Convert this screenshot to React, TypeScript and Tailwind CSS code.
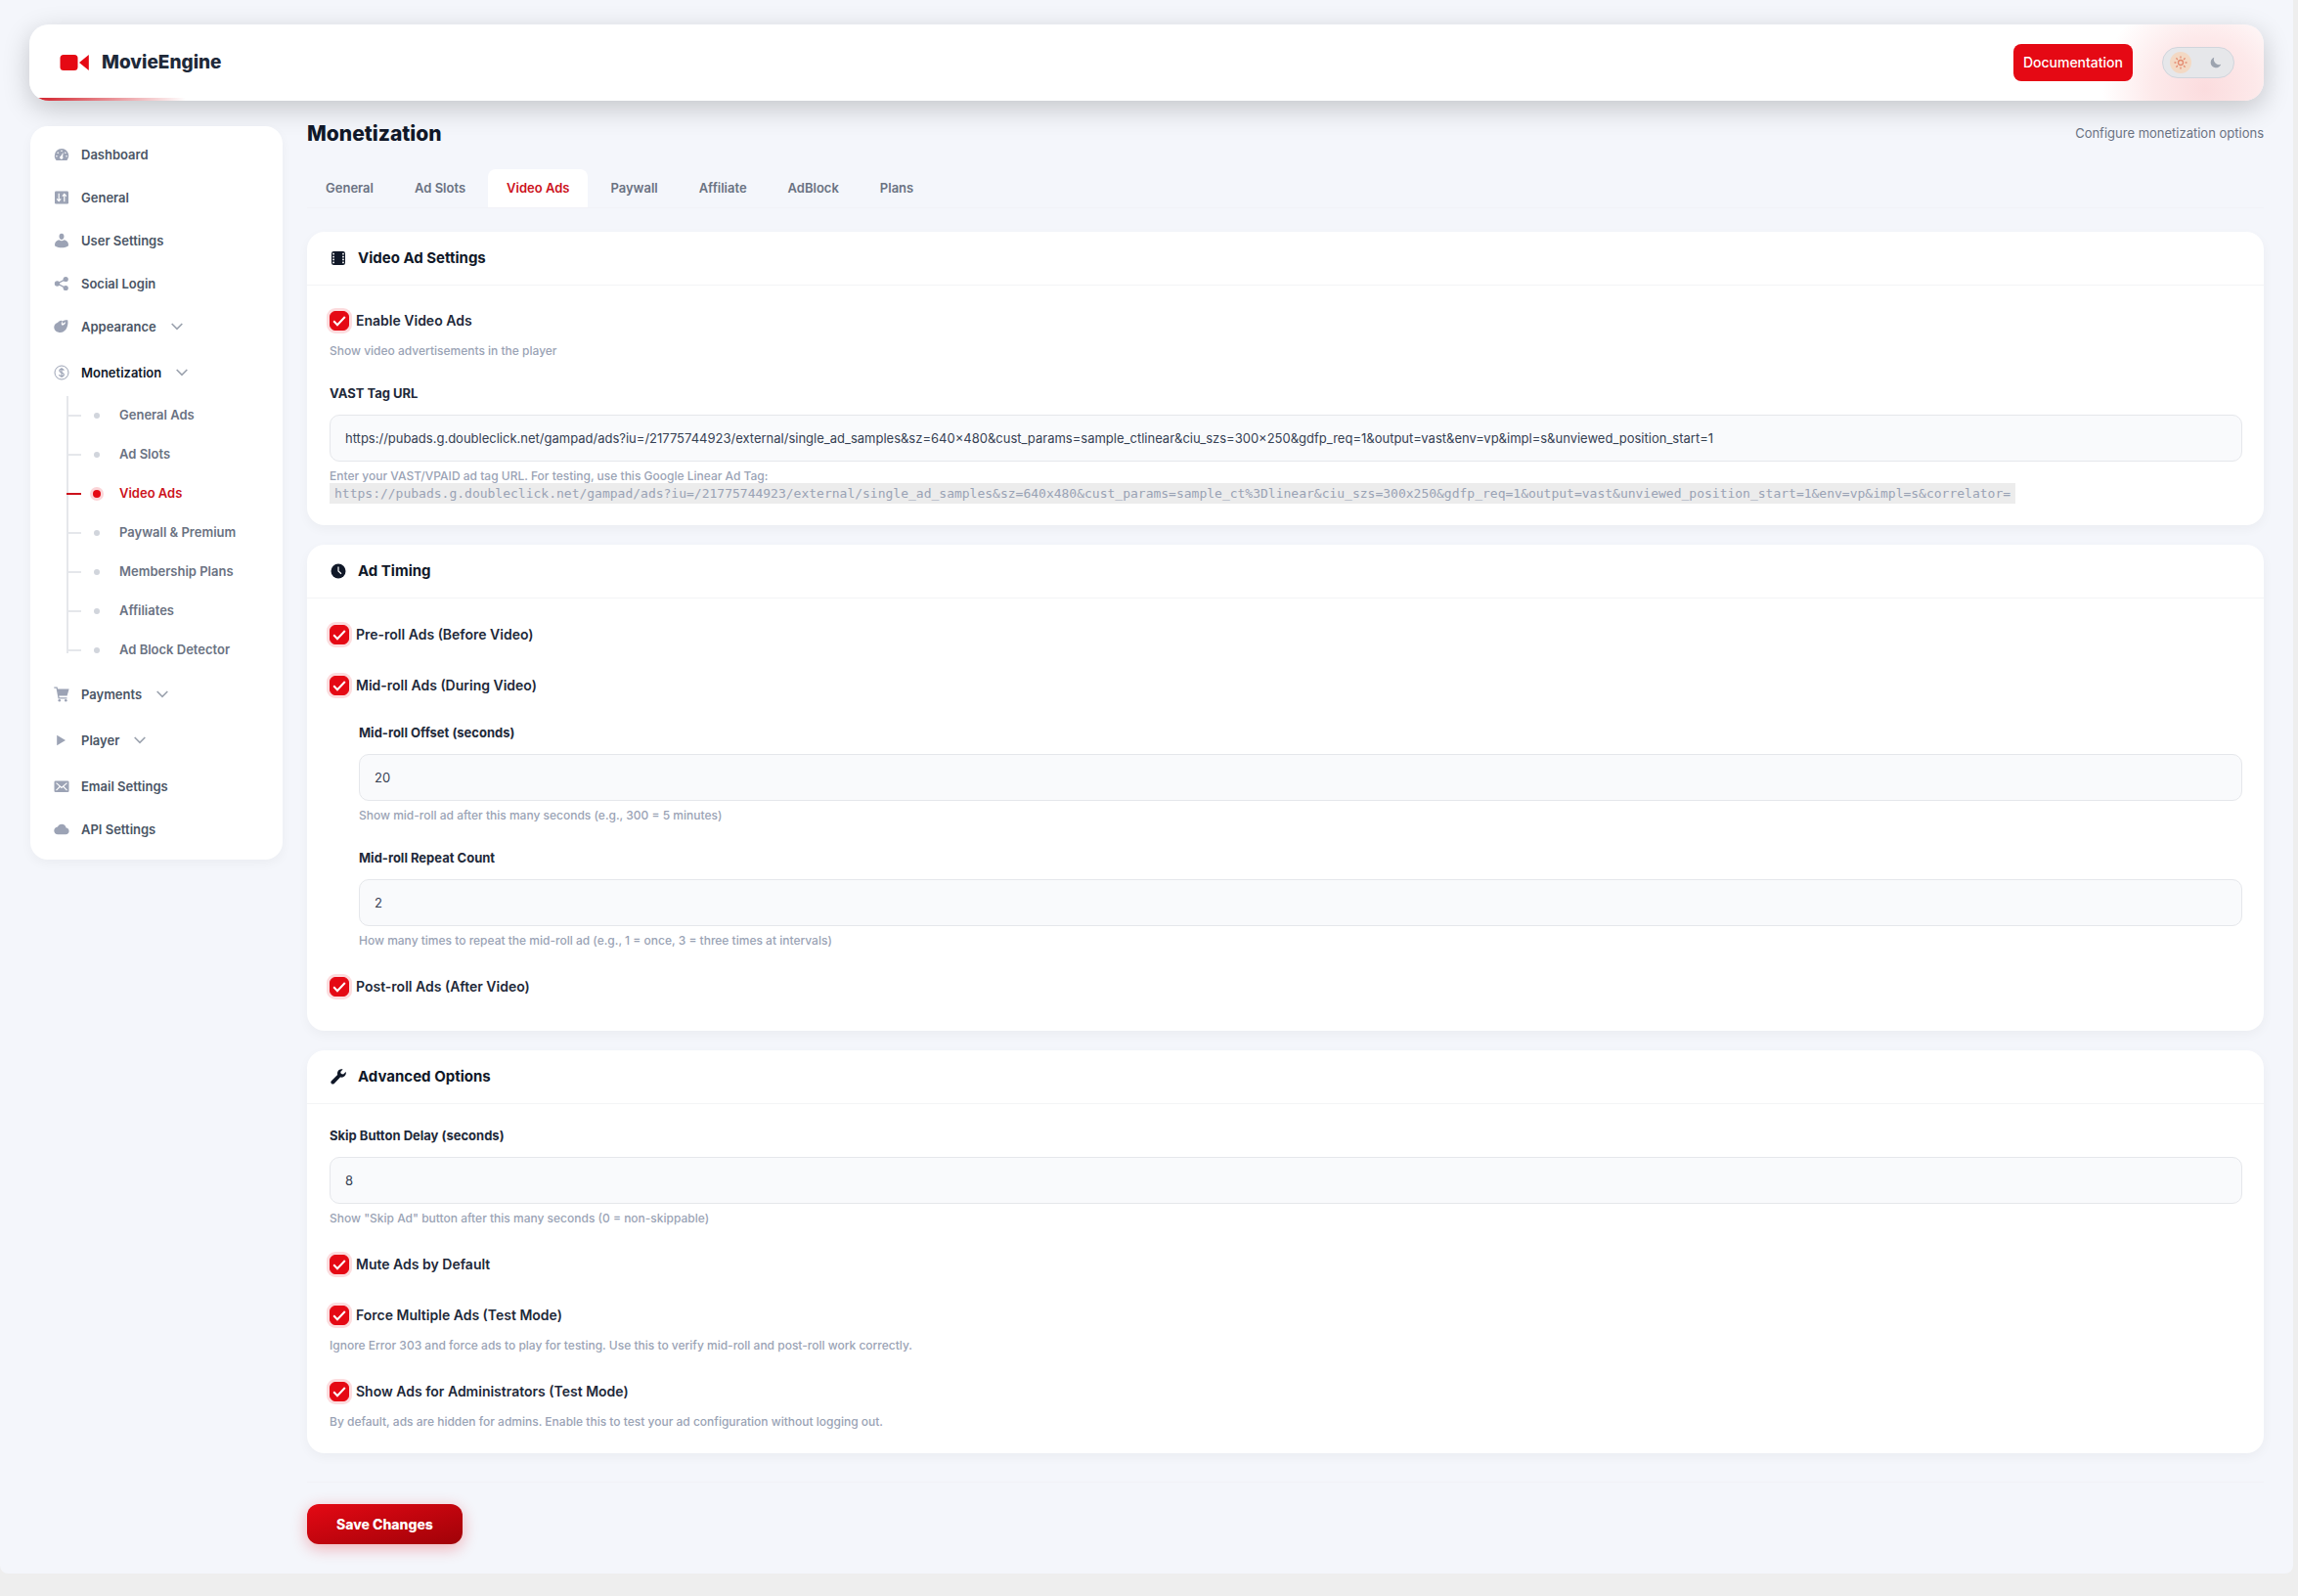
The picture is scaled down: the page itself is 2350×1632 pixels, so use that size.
import React, { useState } from "react";

const VAST_URL =
  "https://pubads.g.doubleclick.net/gampad/ads?iu=/21775744923/external/single_ad_samples&sz=640x480&cust_params=sample_ctlinear&ciu_szs=300x250&gdfp_req=1&output=vast&env=vp&impl=s&unviewed_position_start=1";
const SAMPLE_URL =
  "https://pubads.g.doubleclick.net/gampad/ads?iu=/21775744923/external/single_ad_samples&sz=640x480&cust_params=sample_ct%3Dlinear&ciu_szs=300x250&gdfp_req=1&output=vast&unviewed_position_start=1&env=vp&impl=s&correlator=";

const icons: Record<string, React.ReactNode> = {
  dashboard: (
    <>
      <path
        fill="currentColor"
        d="M8 2a7.2 7.2 0 0 0-7.2 7.2c0 1.6.5 3 1.4 4.2.3.4.6.6 1.1.6h9.4c.5 0 .8-.2 1.1-.6A7.2 7.2 0 0 0 8 2z"
      />
      <g fill="#fff">
        <circle cx="2.9" cy="9.8" r=".8" />
        <circle cx="4.2" cy="6.2" r=".8" />
        <circle cx="8" cy="4.3" r=".8" />
        <circle cx="11.8" cy="6.2" r=".8" />
        <circle cx="13.1" cy="9.8" r=".8" />
        <path d="M9.8 5.8 9.1 9.9a1.7 1.7 0 1 1-1.9-.5z" />
      </g>
    </>
  ),
  general: (
    <>
      <rect x="1" y="1.5" width="14" height="13" rx="1.2" fill="currentColor" />
      <path
        d="M5.200 3.800v7.200M3.200 9.300l2 2.200 2-2.200M10.800 12.200V5M8.800 6.700l2-2.200 2 2.200"
        fill="none"
        stroke="#fff"
        strokeWidth="1.200"
      />
    </>
  ),
  user: (
    <path
      fill="currentColor"
      d="M8 .8c1.500 0 2.500 1.200 2.500 2.900S9.500 7 8 7 5.500 5.400 5.500 3.700 6.500.8 8 .8zM5.300 7.300c.8.700 1.700 1 2.700 1s1.900-.3 2.700-1c2.600.6 4.100 2.200 4.300 5 .05.9-.3 1.300-1 1.700-1.600.9-3.700 1.200-6 1.200s-4.400-.3-6-1.200c-.7-.4-1.050-.8-1-1.700.2-2.800 1.700-4.400 4.300-5z"
    />
  ),
  share: (
    <>
      <path d="M12 3.600 3.600 8l8.400 4.400" fill="none" stroke="currentColor" strokeWidth="1.300" />
      <g fill="currentColor">
        <circle cx="3.500" cy="8" r="2.700" />
        <circle cx="12.200" cy="3.500" r="2.600" />
        <circle cx="12.200" cy="12.500" r="2.600" />
      </g>
    </>
  ),
  appearance: (
    <>
      <path
        fill="currentColor"
        d="M5.500 2.600C7 1.500 8.300 1.600 8.900 2.500c1.300-1 3.300-1.400 5.300-1.300.5 2.200.3 4.500-.4 6.600-1 3.400-3.400 6.100-6.900 6.100C3 13.900.3 11.700.3 8.400c0-2.300 1.500-3.600 3-4.200.8-.3 1.300-.9 2.200-1.600z"
      />
      <path d="M7.800 4.200 9 2.300l-.2 2.600 3.300-1.700c-.2 1.700-1.400 3.200-3.300 3.500-.9-.4-1.200-1.400-1-2.500z" fill="#fff" />
    </>
  ),
  money: (
    <g fill="none" stroke="currentColor">
      <circle cx="8" cy="8" r="7" strokeWidth="1" />
      <path
        strokeWidth="1.200"
        d="M10.300 5.900C10.100 4.900 9.200 4.400 8 4.400s-2.200.6-2.200 1.700c0 2.500 4.500 1.200 4.500 3.800 0 1.100-1 1.800-2.300 1.800s-2.300-.6-2.500-1.700M8 3.100v9.800"
      />
    </g>
  ),
  cart: (
    <>
      <path fill="currentColor" d="M3.800 2.600H15.600l-2 6.900H4.600z" />
      <path d="M.3 1.200h2.800l2 10.700h8.400" fill="none" stroke="currentColor" strokeWidth="1.300" />
      <circle cx="5.800" cy="14.300" r="1.300" fill="currentColor" />
      <circle cx="12.300" cy="14.300" r="1.300" fill="currentColor" />
    </>
  ),
  player: <path fill="currentColor" d="M3.200 2.800v10.400L12 8z" />,
  mail: (
    <>
      <rect x=".5" y="2.500" width="15" height="11.500" rx="1.300" fill="currentColor" />
      <path
        d="m2.500 4.600 5.500 4.800 5.500-4.800M2.500 12.200l3.600-3.700M13.500 12.200 9.900 8.500"
        fill="none"
        stroke="#fff"
        strokeWidth="1.100"
      />
    </>
  ),
  cloud: (
    <path
      fill="currentColor"
      d="M12.600 6.600C12.300 4.400 10.400 2.700 8.100 2.700c-1.900 0-3.500 1.100-4.200 2.800C1.900 5.700.3 7.300.3 9.400c0 2.100 1.700 3.800 3.900 3.800h8c1.900 0 3.400-1.500 3.400-3.300 0-1.700-1.300-3.200-3-3.300z"
    />
  ),
  film: (
    <>
      <rect x="1" y="1" width="14" height="14" rx="2.200" fill="currentColor" />
      <g fill="#fff">
        <rect x="2.200" y="2.800" width="1.700" height="1.700" rx=".4" />
        <rect x="2.200" y="5.700" width="1.700" height="1.700" rx=".4" />
        <rect x="2.200" y="8.600" width="1.700" height="1.700" rx=".4" />
        <rect x="2.200" y="11.500" width="1.700" height="1.700" rx=".4" />
        <rect x="12.100" y="2.800" width="1.700" height="1.700" rx=".4" />
        <rect x="12.100" y="5.700" width="1.700" height="1.700" rx=".4" />
        <rect x="12.100" y="8.600" width="1.700" height="1.700" rx=".4" />
        <rect x="12.100" y="11.500" width="1.700" height="1.700" rx=".4" />
      </g>
    </>
  ),
  clock: (
    <>
      <circle cx="8" cy="8" r="7.500" fill="currentColor" />
      <path d="M8 3.500V8l3 2.700" fill="none" stroke="#fff" strokeWidth="1.200" />
    </>
  ),
  wrench: (
    <path
      fill="currentColor"
      d="M12.600.5c-2.200-.7-4.500.3-5.300 2.500-.4 1-.4 2.100-.1 3.100L.9 12.200c-.8.800-.8 2 0 2.800.8.800 2.100.8 2.900 0l6.200-6.500c1.200.3 2.400.2 3.500-.4 1.900-1 2.700-3.200 2.200-5.200l-2.600 2.600-2.300-.5-.6-2.100z"
    />
  ),
};

const Icon: React.FC<{ name: string }> = ({ name }) => (
  <svg viewBox="0 0 16 16" className="size-4 shrink-0" aria-hidden="true">
    {icons[name]}
  </svg>
);

const Chevron: React.FC = () => (
  <svg viewBox="0 0 12 8" className="h-2 w-3" aria-hidden="true">
    <path d="m.7 1 5.300 5.300L11.300 1" fill="none" stroke="#9ca3af" strokeWidth="1.700" />
  </svg>
);

type NavEntry = { icon: string; label: string; dropdown?: boolean; children?: string[] };

const navEntries: NavEntry[] = [
  { icon: "dashboard", label: "Dashboard" },
  { icon: "general", label: "General" },
  { icon: "user", label: "User Settings" },
  { icon: "share", label: "Social Login" },
  { icon: "appearance", label: "Appearance", dropdown: true },
  {
    icon: "money",
    label: "Monetization",
    dropdown: true,
    children: [
      "General Ads",
      "Ad Slots",
      "Video Ads",
      "Paywall & Premium",
      "Membership Plans",
      "Affiliates",
      "Ad Block Detector",
    ],
  },
  { icon: "cart", label: "Payments", dropdown: true },
  { icon: "player", label: "Player", dropdown: true },
  { icon: "mail", label: "Email Settings" },
  { icon: "cloud", label: "API Settings" },
];

const tabs = ["General", "Ad Slots", "Video Ads", "Paywall", "Affiliate", "AdBlock", "Plans"];

const Header: React.FC = () => (
  <header className="relative flex h-[78px] items-center justify-between overflow-hidden rounded-[20px] bg-white bg-[radial-gradient(circle_105px_at_calc(100%-60px)_66px,#fbdcde,#fde9ea_50%,#ffffff)] px-[30px]">
    <a href="#home" className="flex items-center gap-3 text-[19px] font-extrabold text-gray-800">
      <svg viewBox="0 0 32 16" className="h-4 w-8" aria-hidden="true">
        <rect x="1.500" width="18" height="16" rx="3.500" fill="#e50914" />
        <path d="M30.800 0v16L21 8z" fill="#e50914" />
      </svg>
      MovieEngine
    </a>
    <div className="flex items-center gap-[30px]">
      <a
        href="#docs"
        className="flex h-[38px] items-center rounded-lg bg-[#e50914] px-[10px] text-sm font-medium text-white"
      >
        Documentation
      </a>
      <button
        type="button"
        aria-label="Toggle theme"
        className="flex h-8 w-[74px] items-center justify-between rounded-full border border-gray-300 bg-[#e6e7ea] pr-[12px] pl-[7px]"
      >
        <span className="flex size-[22px] items-center justify-center rounded-full bg-[#f3d9c4]">
          <svg viewBox="0 0 14 14" className="size-[14px]" aria-hidden="true">
            <g fill="none" stroke="#e3896f" strokeWidth="1.300" strokeLinecap="round">
              <circle cx="7" cy="7" r="2.500" />
              <path d="M7 1v.9M7 12.100v.9M1 7h.9M12.100 7h.9M2.800 2.800l.7.7M10.500 10.500l.7.7M2.800 11.200l.7-.7M10.500 3.500l.7-.7" />
            </g>
          </svg>
        </span>
        <svg viewBox="0 0 12 12" className="size-3" aria-hidden="true">
          <path d="M4.300.8A5.400 5.400 0 1 0 11.200 7.700 5.300 5.300 0 0 1 4.300.8z" fill="#9ca3af" />
        </svg>
      </button>
    </div>
    <span className="absolute bottom-0 left-0 h-[3px] w-[160px] bg-linear-to-r from-[#d01722] to-transparent" />
  </header>
);

const Sidebar: React.FC = () => (
  <nav className="w-[258px] shrink-0 rounded-[18px] bg-white py-2 text-[13px] font-semibold text-gray-600 shadow-[0_4px_12px_rgba(0,0,0,0.04)]">
    <ul>
      {navEntries.map(({ icon, label, dropdown, children }) => (
        <li key={label} className={dropdown ? "mb-[3px]" : ""}>
          <a href="#nav" className={`flex h-11 items-center pl-6 ${children ? "text-gray-900" : ""}`}>
            <span className="mr-3 mb-[3px] text-[#9ca3b5]">
              <Icon name={icon} />
            </span>
            {label}
            {dropdown && (
              <span className="mb-[3px] ml-[15px]">
                <Chevron />
              </span>
            )}
          </a>
          {children && (
            <div className="grid py-px pl-[37px]">
              <span className="mb-[17px] w-[2px] bg-gray-200 [grid-area:1/1]" />
              <ul className="[grid-area:1/1]">
                {children.map((child) => {
                  const active = child === "Video Ads";
                  return (
                    <li key={child}>
                      <a
                        href="#sub"
                        className={`flex h-10 items-center ${active ? "text-[#cc121c]" : "text-gray-500"}`}
                      >
                        <span className={`h-[2px] w-[15px] ${active ? "bg-[#cc121c]" : "bg-gray-200"}`} />
                        <span className="flex w-8 justify-center">
                          <span
                            className={
                              active
                                ? "size-2 rounded-full bg-[#e50914] ring-3 ring-[#fbd5d8]"
                                : "size-[6px] rounded-full bg-gray-300"
                            }
                          />
                        </span>
                        <span className="ml-[7px]">{child}</span>
                      </a>
                    </li>
                  );
                })}
              </ul>
            </div>
          )}
        </li>
      ))}
    </ul>
  </nav>
);

const Card: React.FC<{ icon: string; title: string; className?: string; children: React.ReactNode }> = ({
  icon,
  title,
  className = "pt-[22px] pb-[23px]",
  children,
}) => (
  <section className="rounded-[18px] bg-white shadow-[0_4px_12px_rgba(0,0,0,0.04)]">
    <h2 className="flex h-[55px] items-center gap-3 border-b border-gray-100 pl-6 text-[15px] font-bold text-gray-900">
      <Icon name={icon} />
      {title}
    </h2>
    <div className={`flex flex-col gap-6 pr-[22px] pl-[23px] ${className}`}>{children}</div>
  </section>
);

const Checkbox: React.FC<{ label: string; help?: string }> = ({ label, help }) => (
  <div>
    <label className="flex h-7 w-fit items-center gap-[7px] text-sm font-semibold text-gray-800">
      <span className="grid size-5 place-items-center">
        <input
          type="checkbox"
          defaultChecked
          className="peer size-5 appearance-none rounded-[6px] border border-gray-300 [grid-area:1/1] checked:border-[#e50914] checked:bg-[#e50914] checked:ring-3 checked:ring-[#fcdcde]"
        />
        <svg
          viewBox="0 0 14 12"
          className="pointer-events-none invisible h-3 w-[14px] [grid-area:1/1] peer-checked:visible"
          aria-hidden="true"
        >
          <path d="m1.200 6.300 3.800 3.900L12.800 2" fill="none" stroke="#fff" strokeWidth="2" />
        </svg>
      </span>
      {label}
    </label>
    {help && <p className="mt-2 text-xs/[18px] font-medium text-[#9aa3b5]">{help}</p>}
  </div>
);

const Field: React.FC<{ id: string; label: string; value: string; type?: string; children: React.ReactNode }> = ({
  id,
  label,
  value,
  type = "text",
  children,
}) => (
  <div>
    <label htmlFor={id} className="block text-[13px]/5 font-bold text-gray-800">
      {label}
    </label>
    <input
      id={id}
      type={type}
      defaultValue={value}
      className="mt-3 block h-12 w-full rounded-[10px] border border-gray-200 bg-[#f9fafc] px-[15px] text-[13px] text-gray-700"
    />
    <p className="mt-[6px] text-xs/[18px] font-medium text-[#9aa3b5]">{children}</p>
  </div>
);

export default function App() {
  const [tab, setTab] = useState("Video Ads");

  return (
    <div className="bg-[#eeeeee] pr-[5px] pb-[23px] font-[Inter,sans-serif]">
      <div className="rounded-b-lg bg-[#f4f6fb] px-[30px] pt-[25px] pb-[30px]">
        <div className="rounded-[20px] shadow-[0_8px_28px_rgba(0,0,0,0.2)]">
          <Header />
        </div>

        <div className="mt-[26px] flex items-start gap-[25px] pl-px">
          <Sidebar />

          <main className="min-w-0 flex-1">
            <div className="-mt-2 flex h-8 items-center justify-between">
              <h1 className="text-[21px] font-extrabold text-gray-900">Monetization</h1>
              <p className="text-[13px] text-gray-500">Configure monetization options</p>
            </div>

            <div role="tablist" className="mt-5 flex h-10 gap-1 border-b border-[#f1f2f7]">
              {tabs.map((name) => (
                <button
                  key={name}
                  type="button"
                  role="tab"
                  aria-selected={tab === name}
                  onClick={() => setTab(name)}
                  className={`rounded-t-lg px-[19px] text-[13px] font-semibold ${
                    tab === name ? "bg-white text-[#cc121c]" : "text-gray-500"
                  }`}
                >
                  {name}
                </button>
              ))}
            </div>

            <form className="mt-6" onSubmit={(e) => e.preventDefault()}>
              <div className="flex flex-col gap-5">
                <Card icon="film" title="Video Ad Settings">
                  <Checkbox label="Enable Video Ads" help="Show video advertisements in the player" />
                  <Field id="vast-url" label="VAST Tag URL" value={VAST_URL}>
                    Enter your VAST/VPAID ad tag URL. For testing, use this Google Linear Ad Tag:
                    <br />
                    <code className="bg-[#ececec] px-[5px] py-[3px] font-['DejaVu_Sans_Mono',monospace] text-[13px] font-normal">
                      {SAMPLE_URL}
                    </code>
                  </Field>
                </Card>

                <Card icon="clock" title="Ad Timing" className="pt-[23px] pb-[31px]">
                  <Checkbox label="Pre-roll Ads (Before Video)" />
                  <Checkbox label="Mid-roll Ads (During Video)" />
                  <div className="flex flex-col gap-6 pl-[30px]">
                    <Field id="midroll-offset" label="Mid-roll Offset (seconds)" value="20">
                      Show mid-roll ad after this many seconds (e.g., 300 = 5 minutes)
                    </Field>
                    <Field id="midroll-repeat" label="Mid-roll Repeat Count" value="2">
                      How many times to repeat the mid-roll ad (e.g., 1 = once, 3 = three times at intervals)
                    </Field>
                  </div>
                  <Checkbox label="Post-roll Ads (After Video)" />
                </Card>

                <Card icon="wrench" title="Advanced Options">
                  <Field id="skip-delay" label="Skip Button Delay (seconds)" value="8">
                    Show "Skip Ad" button after this many seconds (0 = non-skippable)
                  </Field>
                  <Checkbox label="Mute Ads by Default" />
                  <Checkbox
                    label="Force Multiple Ads (Test Mode)"
                    help="Ignore Error 303 and force ads to play for testing. Use this to verify mid-roll and post-roll work correctly."
                  />
                  <Checkbox
                    label="Show Ads for Administrators (Test Mode)"
                    help="By default, ads are hidden for admins. Enable this to test your ad configuration without logging out."
                  />
                </Card>
              </div>

              <div className="mt-[29px] border-t border-[#f1f2f7] pt-[22px]">
                <button
                  type="submit"
                  className="h-[41px] rounded-xl bg-linear-to-br from-[#e50914] to-[#a00208] px-[30px] text-sm font-extrabold text-white shadow-[0_4px_16px_rgba(229,9,20,0.3)]"
                >
                  Save Changes
                </button>
              </div>
            </form>
          </main>
        </div>
      </div>
    </div>
  );
}
